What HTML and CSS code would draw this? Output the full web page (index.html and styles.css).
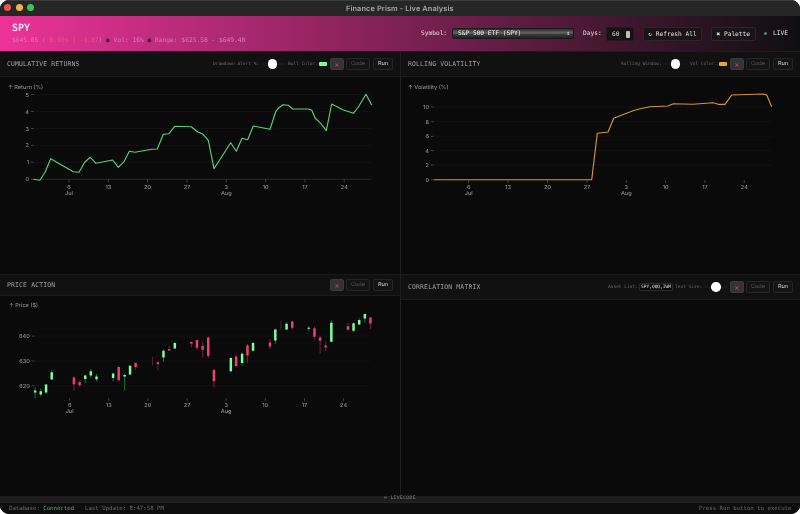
FILE: index.html
```html
<!DOCTYPE html>
<html lang="en">
<head>
<meta charset="utf-8">
<title>Finance Prism - Live Analysis</title>
<link rel="stylesheet" href="styles.css">
</head>
<body>
<div class="window">
  <div class="titlebar">
    <div class="lights"><span class="light red"></span><span class="light amber"></span><span class="light green"></span></div>
    <div class="wintitle">Finance Prism - Live Analysis</div>
  </div>
  <header class="hero">
    <div class="hero-left">
      <div class="ticker">SPY</div>
      <div class="quote">$645.05 ( <span class="neg">0.60% | -3.87</span>) <span class="sep">●</span> Vol: 16% <span class="sep">●</span> Range: $625.58 - $649.48</div>
    </div>
    <div class="hero-right">
      <span class="hlabel sym-label">Symbol:</span>
      <div class="select"><span>S&amp;P 500 ETF (SPY)</span><span class="caret">⇕</span></div>
      <span class="hlabel days-label">Days:</span>
      <div class="days"><span>60</span><span class="spin"></span></div>
      <div class="hbtn refresh">↻ Refresh All</div>
      <div class="hbtn palette">✖ Palette</div>
      <span class="livedot"></span>
      <span class="live">LIVE</span>
    </div>
  </header>

  <main class="grid">
    <section class="panel">
      <div class="phead tall">
        <div class="ptitle">CUMULATIVE RETURNS</div>
        <div class="controls">
          <span class="clabel">Drawdown Alert %:</span>
          <span class="slider"><span class="thumb"></span></span>
          <span class="clabel">Bull Color:</span>
          <span class="swatch bull"></span>
          <span class="btn close">×</span><span class="btn code">Code</span><span class="btn run">Run</span>
        </div>
      </div>
      <svg class="chart" width="400" height="197" viewBox="0 77 400 197">
        <text class="axt" x="8" y="89">↑ Return (%)</text>
        <path class="gridl" d="M34 94.5H371M34 111.5H371M34 128.5H371M34 145.3H371M34 162.3H371"/>
        <path class="axis" d="M34 179.3H371"/>
        <path class="tick" d="M31 94.5h3M31 111.5h3M31 128.5h3M31 145.3h3M31 162.3h3M31 179.3h3M69 179.3v3M108.300 179.300v3M147.600 179.300v3M187 179.300v3M226.300 179.300v3M265.600 179.300v3M305 179.300v3M344.300 179.300v3"/>
        <text class="axt end" x="29" y="96.500">5</text><text class="axt end" x="29" y="113.500">4</text><text class="axt end" x="29" y="130.500">3</text><text class="axt end" x="29" y="147.300">2</text><text class="axt end" x="29" y="164.300">1</text><text class="axt end" x="29" y="181.300">0</text>
        <text class="axt mid" x="69" y="189">6</text><text class="axt mid" x="69" y="195.200">Jul</text><text class="axt mid" x="108.300" y="189">13</text><text class="axt mid" x="147.600" y="189">20</text><text class="axt mid" x="187" y="189">27</text><text class="axt mid" x="226.300" y="189">3</text><text class="axt mid" x="226.300" y="195.200">Aug</text><text class="axt mid" x="265.600" y="189">10</text><text class="axt mid" x="305" y="189">17</text><text class="axt mid" x="344.300" y="189">24</text>
        <polyline class="ret" points="33.300,179.300 40,180.300 45.300,171.700 50.700,158.700 73.300,171.700 79,172.300 84.700,162.300 90.300,157.300 96,163.300 112.700,160 118.300,167.300 124,161.700 129.300,151.300 135,152.300 151.700,149.300 157.300,149 163.300,134.300 169,133.700 174.700,126.300 191.300,126.700 197.300,131.700 202.700,134 208.300,140.300 214,168.700 230.700,142.700 236.300,151.300 242,138.300 247.700,139.700 253.300,126 270,129.300 275.700,111.700 278.300,108.300 283,104.700 288.300,105.300 292.700,109 308.300,109 311.700,110 315,118 320.700,123.300 326.300,130.700 331.700,104 343.300,110 349,111.700 353.300,113.300 358,107.500 366,94.300 371.700,105"/>
      </svg>
    </section>

    <section class="panel side">
      <div class="phead tall">
        <div class="ptitle">ROLLING VOLATILITY</div>
        <div class="controls">
          <span class="clabel">Rolling Window:</span>
          <span class="slider"><span class="thumb"></span></span>
          <span class="clabel">Vol Color:</span>
          <span class="swatch vol"></span>
          <span class="btn close">×</span><span class="btn code">Code</span><span class="btn run">Run</span>
        </div>
      </div>
      <svg class="chart" width="399" height="197" viewBox="401 77 399 197">
        <text class="axt" x="408" y="89">↑ Volatility (%)</text>
        <path class="gridl" d="M434 107H771M434 121.700H771M434 136.300H771M434 150.700H771M434 165H771"/>
        <path class="tick" d="M431 107h3M431 121.700h3M431 136.300h3M431 150.700h3M431 165h3M431 179.700h3M468.700 180v3M508 180v3M547.500 180v3M587 180v3M626.300 180v3M665.600 180v3M705 180v3M744.300 180v3"/>
        <text class="axt end" x="429" y="109">10</text><text class="axt end" x="429" y="123.700">8</text><text class="axt end" x="429" y="138.300">6</text><text class="axt end" x="429" y="152.700">4</text><text class="axt end" x="429" y="167">2</text><text class="axt end" x="429" y="181.700">0</text>
        <text class="axt mid" x="468.700" y="189">6</text><text class="axt mid" x="468.700" y="195.200">Jul</text><text class="axt mid" x="508" y="189">13</text><text class="axt mid" x="547.500" y="189">20</text><text class="axt mid" x="587" y="189">27</text><text class="axt mid" x="626.300" y="189">3</text><text class="axt mid" x="626.300" y="195.200">Aug</text><text class="axt mid" x="665.600" y="189">10</text><text class="axt mid" x="705" y="189">17</text><text class="axt mid" x="744.300" y="189">24</text>
        <polyline class="vola" points="434,179.700 591.700,179.700 597.300,133.300 608,132 613.700,118.300 633,110.700 640,108.700 650,106.700 668,106 673.300,103.700 693,104.300 713,102.700 718.300,104.300 725,104.300 731.700,95 763,94 766.700,95 771.700,106.700"/>
      </svg>
    </section>

    <section class="panel top">
      <div class="phead">
        <div class="ptitle">PRICE ACTION</div>
        <div class="controls">
          <span class="btn close">×</span><span class="btn code">Code</span><span class="btn run">Run</span>
        </div>
      </div>
      <svg class="chart" width="400" height="201" viewBox="0 295 400 201">
        <text class="axt" x="8" y="306">↑ Price ($)</text>
        <path class="gridl" d="M34 335.300H371M34 360.300H371M34 385.300H371"/>
        <path class="tick" d="M31 335.300h3M31 360.300h3M31 385.300h3M69 397.500v3M108.300 397.500v3M147.600 397.500v3M187 397.500v3M226.300 397.500v3M265.600 397.500v3M305 397.500v3M344.300 397.500v3"/>
        <text class="axt end" x="29" y="337.300">640</text><text class="axt end" x="29" y="362.300">630</text><text class="axt end" x="29" y="387.300">620</text>
        <text class="axt mid" x="69" y="406.700">6</text><text class="axt mid" x="69" y="412.900">Jul</text><text class="axt mid" x="108.300" y="406.700">13</text><text class="axt mid" x="147.600" y="406.700">20</text><text class="axt mid" x="187" y="406.700">27</text><text class="axt mid" x="226.300" y="406.700">3</text><text class="axt mid" x="226.300" y="412.900">Aug</text><text class="axt mid" x="265.600" y="406.700">10</text><text class="axt mid" x="305" y="406.700">17</text><text class="axt mid" x="344.300" y="406.700">24</text>
        <path class="wick-up" d="M34.300 386.700V397.700M40 388.300V396M45.300 383.300V393.300M51 369.300V379.300M84.700 374V382.700M90.300 368.300V377.300M96 373.300V380.700M112.700 372V380.700M124.300 373.300V390M129.700 364.700V374.700M163.300 349V361M174.700 341.300V348.300M231 356.700V371.300M242.300 351.700V365M253.300 341.300V351M275.700 327.700V343M287 321.700V329.300M309.300 325.300V330M332 319.300V341.700M354.300 321.700V331.300M360 317.300V324.300M365.700 312.300V322"/>
        <path class="wick-dn" d="M73.300 375.700V390.300M79 380V386.300M118.300 365.700V380M135.300 361.700V369M157.700 360.300V370M169 345V350M191.300 340.700V346.700M197 339V349.300M202.700 341V356.700M208.300 335.700V357.300M214 368.300V386.700M236.300 354V366.700M247.700 343.300V362.300M270.300 338.300V348.700M292.700 320V328.700M315 325.700V338.700M320.700 335V352.700M326.300 340.700V350.700M348.700 322V329.700M371.300 316V328"/>
        <path class="body-up" d="M34.300 390V392M40 390.700V394M45.300 384V392M51 371.700V379M84.700 375V378.300M90.300 370.700V375M96 376V378.700M112.700 373V377.300M124.300 374.300V376M129.700 365V374M163.300 350V356.700M174.700 342.300V347.700M231 357.300V370.700M242.300 353V362.300M253.300 342.300V350M275.700 328.700V339.700M287 323V328.700M309.300 327V328M332 322V341M354.300 322.300V330M360 319V323.700M365.700 313V317.700"/>
        <path class="body-dn" d="M73.300 377V383.700M79 381.700V384.700M118.300 366.300V379.700M135.300 362.300V366.300M157.700 361.700V363.300M169 348.300V349.700M191.300 341.300V343M197 339.300V347M202.700 345.300V349M208.300 336.700V355M214 369.300V380.700M236.300 355.700V365.300M247.700 344.700V354.700M270.300 341.700V345.700M292.700 320.700V327M315 327.300V336M320.700 336.700V340M326.300 344.700V346.700M348.700 325.300V329M371.300 316.700V322.700"/>
        <path class="wick-dim" d="M152.300 356V364.700M281.300 320V329"/>
      </svg>
    </section>

    <section class="panel side top">
      <div class="phead tall">
        <div class="ptitle">CORRELATION MATRIX</div>
        <div class="controls">
          <span class="clabel">Asset List:</span>
          <span class="assets">SPY,QQQ,IWM</span>
          <span class="clabel">Text Size:</span>
          <span class="slider tight"><span class="thumb"></span></span>
          <span class="btn close">×</span><span class="btn code">Code</span><span class="btn run">Run</span>
        </div>
      </div>
      <div class="empty"></div>
    </section>
  </main>

  <div class="livebar">≡ LIVECODE</div>
  <footer class="status">
    <div class="status-left"><span>Database: <span class="ok">Connected</span></span><span>Last Update: 8:47:58 PM</span></div>
    <div>Press Run button to execute</div>
  </footer>
</div>
</body>
</html>
```

FILE: styles.css
```css
* { box-sizing: border-box; }
html, body { height: 100%; margin: 0; background: #fff; }
body { overflow: hidden; }

.window {
  height: 514px;
  display: flex;
  flex-direction: column;
  background: #0a0a0a;
  border-radius: 9px;
  overflow: hidden;
  font-family: "DejaVu Sans Mono", "Liberation Mono", monospace;
  text-rendering: geometricPrecision;
  filter: blur(.3px);
}

/* small text is painted on its own layer so it stays greyscale */
.ptitle, .clabel, .wintitle, .ticker, .quote, .hlabel, .live, .status-left, .status > div,
.livebar, .btn, .hbtn, .select, .days, .assets, .chart {
  will-change: transform;
}

/* title bar */
.titlebar {
  flex: 0 0 16px;
  display: flex;
  align-items: center;
  justify-content: center;
  position: relative;
  background: #262626;
  border-top: 1px solid #3c3c3c;
}
.lights {
  position: absolute;
  left: 4px;
  top: 3px;
  display: flex;
  gap: 4.5px;
}
.light { width: 7px; height: 7px; border-radius: 50%; }
.light.red { background: #e9574f; }
.light.amber { background: #f4b440; }
.light.green { background: #3fc54b; }
.wintitle {
  font-family: Inter, "Noto Sans", sans-serif;
  font-size: 7.4px;
  font-weight: 600;
  color: #a8a8a8;
  letter-spacing: .1px;
}

/* hero header */
.hero {
  flex: 0 0 36px;
  display: flex;
  justify-content: space-between;
  align-items: center;
  padding: 0 12px 0 12px;
  background: linear-gradient(90deg, #ec3399 0%, #0f0f10 100%);
  border-bottom: 1px solid #1d1d1d;
}
.hero-left { display: flex; flex-direction: column; gap: 2px; }
.ticker { font-size: 10px; font-weight: 700; line-height: 12px; color: #f9e3ee; }
.quote { font-size: 6.25px; line-height: 8px; color: #d67fb4; white-space: nowrap; }
.neg { color: #f0557f; }
.sep { color: #3d1a30; }
.hero-right { display: flex; align-items: center; color: #cfcfcf; }
.hlabel { font-size: 6.2px; color: #e6dae1; }
.select {
  width: 122px;
  height: 11px;
  margin-left: 5px;
  padding: 0 3px 0 5px;
  display: flex;
  align-items: center;
  justify-content: space-between;
  border-radius: 2px;
  font-size: 6.2px;
  color: #eee;
  background: linear-gradient(180deg, #2d2d2d 0%, #666 45%, #3a3a3a 60%, #222 100%);
  border: 1px solid #191919;
}
.caret { font-size: 6px; }
.days-label { margin-left: 9px; }
.days {
  width: 27.5px;
  height: 14px;
  margin-left: 4px;
  padding: 0 3px 0 5px;
  display: flex;
  align-items: center;
  justify-content: space-between;
  background: #161214;
  border: 1px solid #231a20;
  border-radius: 2px;
  font-size: 6.2px;
  color: #ddd;
}
.spin { width: 4px; height: 7px; background: #bbb; border-radius: 1px; }
.hbtn {
  height: 14px;
  display: flex;
  align-items: center;
  justify-content: center;
  background: #1a1418;
  border: 1px solid #2d242a;
  border-radius: 2px;
  font-size: 6.2px;
  color: #e2e2e2;
  white-space: nowrap;
}
.refresh { width: 59px; margin-left: 10px; }
.palette { width: 44.5px; margin-left: 8.5px; }
.livedot { width: 3px; height: 3px; border-radius: 50%; background: #2f9d4e; margin-left: 8.5px; }
.live { font-size: 6.2px; color: #e2e2e2; margin-left: 6.5px; }

/* grid */
.grid {
  flex: 1;
  min-height: 0;
  display: grid;
  grid-template-columns: 400px 400px;
  grid-template-rows: 222px 222px;
}
.panel { display: flex; flex-direction: column; min-height: 0; background: #0a0a0a; overflow: hidden; }
.panel.side { border-left: 1px solid #1f1f1f; }
.panel.top { border-top: 1px solid #1a1a1a; }
.phead {
  flex: 0 0 21px;
  display: flex;
  align-items: center;
  justify-content: space-between;
  padding: 0 7px 0 7px;
  background: #111;
  border-bottom: 1px solid #1c1c1c;
}
.phead.tall { flex-basis: 25px; }
.ptitle { font-size: 6.4px; letter-spacing: .18px; color: #a0a0a0; white-space: nowrap; }
.controls { display: flex; align-items: center; }
.clabel { font-size: 4.5px; color: #6c6c6c; white-space: nowrap; margin-right: 1.5px; }
.slider {
  width: 24px;
  height: 10px;
  margin-right: 3px;
  display: flex;
  align-items: center;
  justify-content: center;
  background: linear-gradient(#0000 4px, #181818 4px, #181818 6px, #0000 6px);
}
.slider.tight { margin-right: 2px; }
.thumb { width: 9.500px; height: 9.500px; border-radius: 50%; background: #fff; }
.swatch { width: 8px; height: 4.5px; margin-right: 3px; border-radius: 1px; }
.swatch.bull { background: #7dff9c; }
.swatch.vol { background: #f2a235; }
.btn {
  height: 12px;
  display: flex;
  align-items: center;
  justify-content: center;
  border-radius: 2px;
  font-family: Inter, "Noto Sans", sans-serif;
  font-size: 5.6px;
  border: 1px solid #262626;
  background: #141414;
}
.btn.close { width: 14px; background: #333; border-color: #3a3a3a; color: #c2385e; font-weight: 700; font-size: 7px; margin-right: 2px; }
.btn.code { width: 24px; color: #5c5c5c; margin-right: 3px; }
.btn.run { width: 20px; color: #d4d4d4; }
.assets {
  width: 34px;
  height: 8px;
  margin-right: 2.5px;
  display: flex;
  align-items: center;
  justify-content: center;
  background: #0a0a0a;
  border: 1px solid #2a2a2a;
  border-radius: 1px;
  font-size: 4.5px;
  color: #e8e8e8;
  white-space: nowrap;
  overflow: hidden;
}
.chart { display: block; flex: 1; min-height: 0; }
.empty { flex: 1; }

/* chart marks */
.axt { font-family: Inter, "Noto Sans", sans-serif; font-size: 5.6px; font-weight: 500; fill: #8c8c8c; }
.end { text-anchor: end; }
.mid { text-anchor: middle; }
.gridl { stroke: #121212; stroke-width: 1; fill: none; }
.axis { stroke: #292929; stroke-width: 1; fill: none; }
.tick { stroke: #4c4c4c; stroke-width: .8; fill: none; }
.ret { fill: none; stroke: #58d077; stroke-width: 1.15; stroke-linejoin: round; }
.vola { fill: none; stroke: #d9952f; stroke-width: 1.15; stroke-linejoin: round; }
.wick-up { stroke: #2c8a4c; stroke-width: .8; fill: none; }
.wick-dn { stroke: #8e2a50; stroke-width: .8; fill: none; }
.wick-dim { stroke: #6d2342; stroke-width: .8; fill: none; }
.body-up { stroke: #7dff9c; stroke-width: 2.500; fill: none; }
.body-dn { stroke: #f03e72; stroke-width: 2.500; fill: none; }

/* footer */
.livebar {
  flex: 0 0 6px;
  display: flex;
  align-items: center;
  justify-content: center;
  background: #1d1d1d;
  font-size: 4.800px;
  letter-spacing: .3px;
  color: #808080;
  line-height: 6px;
}
.status {
  flex: 0 0 12px;
  display: flex;
  align-items: center;
  justify-content: space-between;
  padding: 0 9px;
  background: #0e0e0e;
  border-top: 1px solid #222;
  font-size: 5.7px;
  color: #6a6a6a;
}
.status-left { display: flex; gap: 11px; }
.ok { color: #43b765; }
```
